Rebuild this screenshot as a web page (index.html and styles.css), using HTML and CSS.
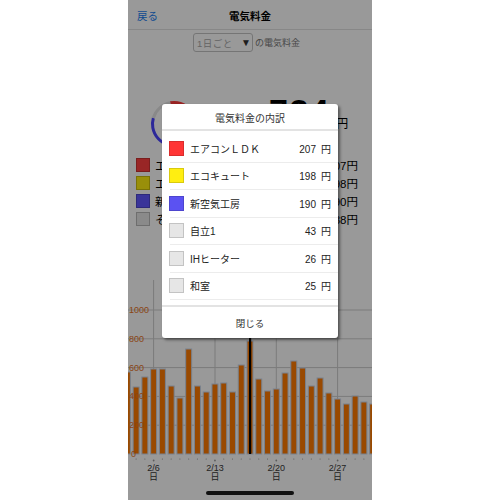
FILE: index.html
```
<!DOCTYPE html>
<html lang="ja">
<head>
<meta charset="utf-8">
<title>電気料金</title>
<link rel="stylesheet" href="styles.css">
</head>
<body>
<div class="screen">
  <div class="page">
    <header class="nav">
      <span class="back">戻る</span>
      <h1 class="title">電気料金</h1>
      <span></span>
    </header>
    <div class="period">
      <div class="select"><span class="select-text">1日ごと</span><span class="caret">▼</span></div>
      <span class="period-label">の電気料金</span>
    </div>
    <div class="summary">
      <svg class="donut" viewBox="0 0 48 48" width="48" height="48">
        <g transform="rotate(-100 24 24)" fill="none" stroke-width="3">
          <circle cx="24" cy="24" r="21.5" pathLength="100" stroke="#ff3b3b" stroke-dasharray="28.6 71.4" stroke-dashoffset="0"/>
          <circle cx="24" cy="24" r="21.5" pathLength="100" stroke="#ffee11" stroke-dasharray="27.4 72.6" stroke-dashoffset="-28.6"/>
          <circle cx="24" cy="24" r="21.5" pathLength="100" stroke="#4a44ff" stroke-dasharray="26.3 73.7" stroke-dashoffset="-56"/>
          <circle cx="24" cy="24" r="21.5" pathLength="100" stroke="#e4e4e4" stroke-dasharray="17.7 82.3" stroke-dashoffset="-82.3"/>
        </g>
      </svg>
      <div class="total"><span class="total-num">734</span><span class="total-unit">円</span></div>
    </div>
    <ul class="legend">
      <li><span class="sw sw-red"></span><span class="name">エアコンＬＤＫ</span><span class="val">207円</span></li>
      <li><span class="sw sw-yellow"></span><span class="name">エコキュート</span><span class="val">198円</span></li>
      <li><span class="sw sw-blue"></span><span class="name">新空気工房</span><span class="val">190円</span></li>
      <li><span class="sw sw-gray"></span><span class="name">その他</span><span class="val">138円</span></li>
    </ul>
    <div class="chart">
      <svg class="chart-svg" viewBox="0 0 244 205" width="244" height="205">
        <g class="grid" stroke="#cdcdcd" stroke-width="1">
          <line x1="0" y1="30" x2="244" y2="30"/>
          <line x1="0" y1="58.8" x2="244" y2="58.8"/>
          <line x1="0" y1="87.6" x2="244" y2="87.6"/>
          <line x1="0" y1="116.4" x2="244" y2="116.4"/>
          <line x1="0" y1="145.2" x2="244" y2="145.2"/>
          <line x1="25.6" y1="0" x2="25.6" y2="174"/>
          <line x1="87" y1="0" x2="87" y2="174"/>
          <line x1="148.3" y1="0" x2="148.3" y2="174"/>
          <line x1="209.6" y1="0" x2="209.6" y2="174"/>
        </g>
        <g class="bars" fill="#ff7a00" stroke="#c9d8ee" stroke-width="1">
          <rect x="-3.64" y="92" width="6" height="82"/>
          <rect x="5.12" y="107" width="6" height="67"/>
          <rect x="13.88" y="97" width="6" height="77"/>
          <rect x="22.64" y="89" width="6" height="85"/>
          <rect x="31.4" y="89" width="6" height="85"/>
          <rect x="40.16" y="106" width="6" height="68"/>
          <rect x="48.92" y="118" width="6" height="56"/>
          <rect x="57.68" y="69" width="6" height="105"/>
          <rect x="66.44" y="106" width="6" height="68"/>
          <rect x="75.2" y="112" width="6" height="62"/>
          <rect x="83.96" y="104" width="6" height="70"/>
          <rect x="92.72" y="103" width="6" height="71"/>
          <rect x="101.48" y="112" width="6" height="62"/>
          <rect x="110.24" y="85" width="6" height="89"/>
          <rect x="119" y="61" width="6" height="113"/>
          <rect x="127.76" y="99" width="6" height="75"/>
          <rect x="136.52" y="111" width="6" height="63"/>
          <rect x="145.28" y="109" width="6" height="65"/>
          <rect x="154.04" y="93" width="6" height="81"/>
          <rect x="162.8" y="81" width="6" height="93"/>
          <rect x="171.56" y="88" width="6" height="86"/>
          <rect x="180.32" y="106" width="6" height="68"/>
          <rect x="189.08" y="98" width="6" height="76"/>
          <rect x="197.84" y="113" width="6" height="61"/>
          <rect x="206.6" y="119" width="6" height="55"/>
          <rect x="215.36" y="124" width="6" height="50"/>
          <rect x="224.12" y="116" width="6" height="58"/>
          <rect x="232.88" y="122" width="6" height="52"/>
          <rect x="241.64" y="124" width="6" height="50"/>
        </g>
        <rect class="cursor" x="121" y="0" width="2.2" height="174" fill="#000"/>
        <g class="ylabels" fill="#e8731f" font-size="9">
          <text x="1" y="33">1000</text>
          <text x="1" y="61.8">800</text>
          <text x="1" y="90.6">600</text>
          <text x="1" y="119.4">400</text>
          <text x="1" y="148.2">200</text>
          <text x="3" y="177">0</text>
        </g>
        <g class="ticks" fill="#9a9a9a">
          <circle cx="-0.64" cy="179" r="0.6"/><circle cx="8.12" cy="179" r="0.6"/><circle cx="16.88" cy="179" r="0.6"/>
          <circle cx="25.64" cy="180.5" r="0.9"/><circle cx="34.4" cy="179" r="0.6"/><circle cx="43.16" cy="179" r="0.6"/>
          <circle cx="51.92" cy="179" r="0.6"/><circle cx="60.68" cy="179" r="0.6"/><circle cx="69.44" cy="179" r="0.6"/>
          <circle cx="78.2" cy="179" r="0.6"/><circle cx="86.96" cy="180.5" r="0.9"/><circle cx="95.72" cy="179" r="0.6"/>
          <circle cx="104.48" cy="179" r="0.6"/><circle cx="113.24" cy="179" r="0.6"/><circle cx="122" cy="179" r="0.6"/>
          <circle cx="130.76" cy="179" r="0.6"/><circle cx="139.52" cy="179" r="0.6"/><circle cx="148.28" cy="180.5" r="0.9"/>
          <circle cx="157.04" cy="179" r="0.6"/><circle cx="165.8" cy="179" r="0.6"/><circle cx="174.56" cy="179" r="0.6"/>
          <circle cx="183.32" cy="179" r="0.6"/><circle cx="192.08" cy="179" r="0.6"/><circle cx="200.84" cy="179" r="0.6"/>
          <circle cx="209.6" cy="180.5" r="0.9"/><circle cx="218.36" cy="179" r="0.6"/><circle cx="227.12" cy="179" r="0.6"/>
          <circle cx="235.88" cy="179" r="0.6"/><circle cx="244.64" cy="179" r="0.6"/>
        </g>
        <g class="xlabels" fill="#3a3a3a" font-size="9" text-anchor="middle">
          <text x="25.6" y="190.5">2/6</text><text x="25.6" y="199.5">日</text>
          <text x="87" y="190.5">2/13</text><text x="87" y="199.5">日</text>
          <text x="148.3" y="190.5">2/20</text><text x="148.3" y="199.5">日</text>
          <text x="209.6" y="190.5">2/27</text><text x="209.6" y="199.5">日</text>
        </g>
      </svg>
    </div>
  </div>
  <div class="dim"></div>
  <section class="modal">
    <h2 class="modal-head">電気料金の内訳</h2>
    <ul class="modal-list">
      <li class="modal-row"><span class="msw msw-red"></span><span class="m-name">エアコンＬＤＫ</span><span class="m-val">207<span class="m-unit">円</span></span></li>
      <li class="modal-row"><span class="msw msw-yellow"></span><span class="m-name">エコキュート</span><span class="m-val">198<span class="m-unit">円</span></span></li>
      <li class="modal-row"><span class="msw msw-blue"></span><span class="m-name">新空気工房</span><span class="m-val">190<span class="m-unit">円</span></span></li>
      <li class="modal-row"><span class="msw msw-gray"></span><span class="m-name">自立1</span><span class="m-val">43<span class="m-unit">円</span></span></li>
      <li class="modal-row"><span class="msw msw-gray"></span><span class="m-name">IHヒーター</span><span class="m-val">26<span class="m-unit">円</span></span></li>
      <li class="modal-row"><span class="msw msw-gray"></span><span class="m-name">和室</span><span class="m-val">25<span class="m-unit">円</span></span></li>
    </ul>
    <div class="modal-foot">閉じる</div>
  </section>
  <div class="home-indicator"></div>
</div>
</body>
</html>
```
FILE: styles.css
```
* { box-sizing: border-box; }

body {
  margin: 0;
  background: #fff;
  font-family: "Liberation Sans", "Noto Sans CJK JP", sans-serif;
}

.screen {
  position: relative;
  width: 244px;
  height: 500px;
  margin-left: 128px;
  overflow: hidden;
  background: #fff;
}

/* nav bar */
.nav {
  display: grid;
  grid-template-columns: 1fr auto 1fr;
  align-items: center;
  height: 30px;
  padding: 2px 9px 0;
  border-bottom: 1px solid #e2e2e2;
}
.back { color: #1a7cf0; font-size: 10.5px; }
.title { margin: 0; font-size: 10.5px; font-weight: bold; color: #000; }

/* period selector */
.period {
  display: flex;
  align-items: center;
  gap: 2px;
  height: 19px;
  margin-top: 3px;
  padding-left: 65px;
}
.select {
  display: flex;
  align-items: center;
  justify-content: space-between;
  width: 60px;
  height: 19px;
  padding: 0 1px 0 3px;
  border: 1px solid #c4c4c4;
  border-radius: 3px;
}
.select-text { font-size: 9.5px; color: #a8a8a8; letter-spacing: 0.5px; }
.caret { font-size: 10px; color: #333; }
.period-label { font-size: 9px; color: #777; }

/* summary */
.summary {
  display: flex;
  align-items: center;
  height: 56px;
  margin-top: 44px;
  padding-left: 22px;
}
.donut { display: block; }
.total {
  align-self: flex-start;
  margin: -2px 0 0 71px;
  line-height: 34px;
  white-space: nowrap;
}
.total-num { font-size: 34px; font-weight: bold; color: #000; letter-spacing: 1.5px; }
.total-unit {
  display: inline-block;
  margin-left: 6px;
  font-size: 12px;
  color: #000;
  vertical-align: -5px;
}

/* legend */
.legend {
  list-style: none;
  margin: 4px 0 0;
  padding: 0 14px 0 8px;
}
.legend li {
  display: flex;
  align-items: center;
  height: 18px;
  font-size: 11.5px;
  color: #000;
}
.sw {
  width: 14px;
  height: 14px;
  margin-right: 5px;
  border: 1px solid rgba(0, 0, 0, 0.2);
}
.sw-red { background: #ff4040; }
.sw-yellow { background: #ffee11; }
.sw-blue { background: #5f58ff; }
.sw-gray { background: #e6e6e6; }
.legend .val { margin-left: auto; }

/* chart */
.chart { margin-top: 52px; }
.chart-svg { display: block; font-family: "Liberation Sans", "Noto Sans CJK JP", sans-serif; }

/* overlay */
.dim {
  position: absolute;
  inset: 0;
  background: rgba(0, 0, 0, 0.4);
}

.modal {
  position: absolute;
  left: 34px;
  top: 104px;
  width: 176px;
  height: 234px;
  display: flex;
  flex-direction: column;
  overflow: hidden;
  background: #fff;
  border-radius: 3px;
  box-shadow: 2px 2px 3px rgba(0, 0, 0, 0.45);
}
.modal-head {
  flex: none;
  height: 27px;
  margin: 0;
  padding-top: 2px;
  display: flex;
  align-items: center;
  justify-content: center;
  font-size: 10px;
  font-weight: normal;
  color: #333;
  border-bottom: 2px solid #e3e3e3;
}
.modal-list {
  flex: 1;
  list-style: none;
  margin: 0;
  padding: 4px 0 0;
  overflow: hidden;
}
.modal-row {
  display: flex;
  align-items: center;
  height: 27.5px;
  margin-left: 8px;
  padding-right: 7px;
  border-bottom: 1px solid #ececec;
  font-size: 10px;
  color: #222;
}
.msw {
  width: 15px;
  height: 15px;
  margin-left: -1px;
  margin-right: 6px;
  border: 1px solid rgba(0, 0, 0, 0.15);
}
.msw-red { background: #ff3535; }
.msw-yellow { background: #ffee11; }
.msw-blue { background: #5b52f2; }
.msw-gray { background: #e6e6e6; }
.m-val { margin-left: auto; }
.m-unit { margin-left: 5px; }
.modal-foot {
  flex: none;
  height: 33px;
  display: flex;
  align-items: center;
  justify-content: center;
  border-top: 2px solid #e3e3e3;
  font-size: 9.5px;
  color: #333;
}

.home-indicator {
  position: absolute;
  left: 78px;
  bottom: 5px;
  width: 88px;
  height: 4px;
  border-radius: 2px;
  background: #111;
}
```
